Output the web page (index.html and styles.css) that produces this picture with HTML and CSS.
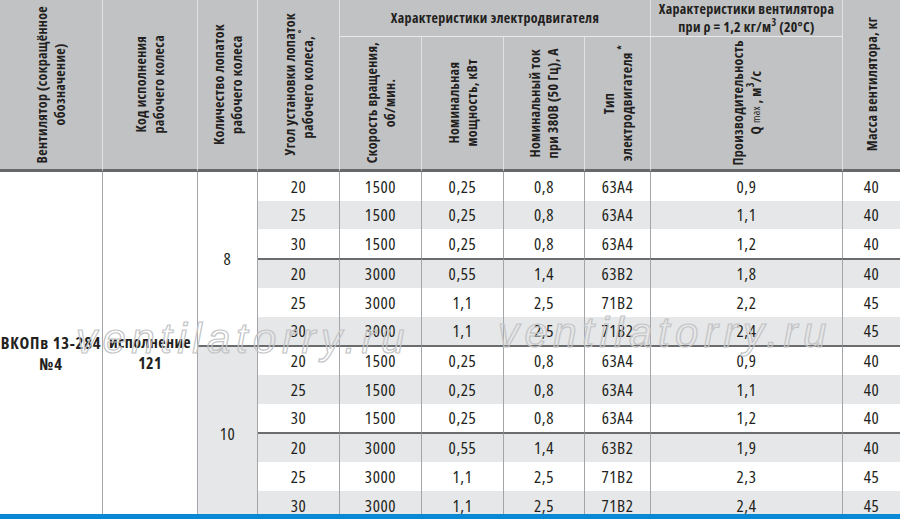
FILE: index.html
```html
<!DOCTYPE html>
<html lang="ru">
<head>
<meta charset="utf-8">
<title>ВКОПв 13-284 №4</title>
<link rel="stylesheet" href="styles.css">
</head>
<body>
<div class="page">
  <div class="sheet">
    <div class="grid">
      <div class="h s2"><span class="v">Вентилятор (сокращённое<br>обозначение)</span></div>
      <div class="h s2"><span class="v">Код исполнения<br>рабочего колеса</span></div>
      <div class="h s2"><span class="v">Количество лопаток<br>рабочего колеса</span></div>
      <div class="h s2"><span class="v">Угол установки лопаток<br>рабочего колеса, <sup>°</sup></span></div>
      <div class="h top g4"><span class="hz">Характеристики электродвигателя</span></div>
      <div class="h top"><span class="hz">Характеристики вентилятора<br>при ρ = 1,2 кг/м<sup>3</sup> (20°С)</span></div>
      <div class="h s2 last"><span class="v">Масса вентилятора, кг</span></div>

      <div class="h bot"><span class="v">Скорость вращения,<br>об/мин.</span></div>
      <div class="h bot"><span class="v">Номинальная<br>мощность, кВт</span></div>
      <div class="h bot"><span class="v">Номинальный ток<br>при 380В (50 Гц), А</span></div>
      <div class="h bot"><span class="v">Тип<br>электродвигателя <sup>*</sup></span></div>
      <div class="h bot"><span class="v">Производительность<br>Q <span class="sm">max</span> , м<sup>3</sup>/с</span></div>

      <!-- row 1 -->
      <div class="d r12 name wide">ВКОПв 13-284<br>№4</div>
      <div class="d r12 name">исполнение<br>121</div>
      <div class="d r6">8</div>
      <div class="d">20</div><div class="d">1500</div><div class="d">0,25</div><div class="d">0,8</div><div class="d">63А4</div><div class="d">0,9</div><div class="d last">40</div>
      <!-- row 2 -->
      <div class="d a">25</div><div class="d a">1500</div><div class="d a">0,25</div><div class="d a">0,8</div><div class="d a">63А4</div><div class="d a">1,1</div><div class="d a last">40</div>
      <!-- row 3 -->
      <div class="d">30</div><div class="d">1500</div><div class="d">0,25</div><div class="d">0,8</div><div class="d">63А4</div><div class="d">1,2</div><div class="d last">40</div>
      <!-- row 4 -->
      <div class="d a t">20</div><div class="d a t">3000</div><div class="d a t">0,55</div><div class="d a t">1,4</div><div class="d a t">63В2</div><div class="d a t">1,8</div><div class="d a t last">40</div>
      <!-- row 5 -->
      <div class="d">25</div><div class="d">3000</div><div class="d">1,1</div><div class="d">2,5</div><div class="d">71В2</div><div class="d">2,2</div><div class="d last">45</div>
      <!-- row 6 -->
      <div class="d a">30</div><div class="d a">3000</div><div class="d a">1,1</div><div class="d a">2,5</div><div class="d a">71В2</div><div class="d a">2,4</div><div class="d a last">45</div>
      <!-- row 7 -->
      <div class="d r6 a t">10</div>
      <div class="d t">20</div><div class="d t">1500</div><div class="d t">0,25</div><div class="d t">0,8</div><div class="d t">63А4</div><div class="d t">0,9</div><div class="d t last">40</div>
      <!-- row 8 -->
      <div class="d a">25</div><div class="d a">1500</div><div class="d a">0,25</div><div class="d a">0,8</div><div class="d a">63А4</div><div class="d a">1,1</div><div class="d a last">40</div>
      <!-- row 9 -->
      <div class="d">30</div><div class="d">1500</div><div class="d">0,25</div><div class="d">0,8</div><div class="d">63А4</div><div class="d">1,2</div><div class="d last">40</div>
      <!-- row 10 -->
      <div class="d a t">20</div><div class="d a t">3000</div><div class="d a t">0,55</div><div class="d a t">1,4</div><div class="d a t">63В2</div><div class="d a t">1,9</div><div class="d a t last">40</div>
      <!-- row 11 -->
      <div class="d">25</div><div class="d">3000</div><div class="d">1,1</div><div class="d">2,5</div><div class="d">71В2</div><div class="d">2,3</div><div class="d last">45</div>
      <!-- row 12 -->
      <div class="d a">30</div><div class="d a">3000</div><div class="d a">1,1</div><div class="d a">2,5</div><div class="d a">71В2</div><div class="d a">2,4</div><div class="d a last">45</div>
    </div>
    <span class="wm wm1">ventilatorry.ru</span>
    <span class="wm wm2">ventilatorry.ru</span>
  </div>
  <div class="bar"></div>
</div>
</body>
</html>
```

FILE: styles.css
```css
html, body {
  margin: 0;
  padding: 0;
  background: #ffffff;
}

.page {
  width: 900px;
  height: 519px;
  display: flex;
  flex-direction: column;
  overflow: hidden;
  color: #231f20;
  font-family: "Open Sans", "Liberation Sans", sans-serif;
  font-stretch: 75%;
}

.sheet {
  position: relative;
  flex: 1 1 auto;
  min-height: 0;
  overflow: hidden;
}

.bar {
  flex: 0 0 5px;
  background: #0a88d6;
}

.grid {
  display: grid;
  grid-template-columns: 103px 95px 60px 82px 82px 82px 81px 66px 192px 57px;
  grid-template-rows: 37px 135px 29px 28px 29px 30px 29px 28px 30px 29px 28px 30px 29px 29px;
}

/* header */
.h {
  box-sizing: border-box;
  background: #c1c2c4;
  border-right: 1px solid #e1e2e3;
  display: flex;
  align-items: center;
  justify-content: center;
  font-weight: bold;
  font-size: 14px;
  letter-spacing: 0.3px;
  line-height: 18px;
  text-align: center;
}

.h.s2 {
  grid-row: span 2;
  border-bottom: 3px solid #67686a;
}

.h.bot {
  border-bottom: 3px solid #67686a;
}

.h.top {
  border-bottom: 1px solid #e8e9ea;
}

.g4 {
  grid-column: span 4;
}

.last {
  border-right: 0 !important;
}

.v {
  writing-mode: vertical-rl;
  transform: rotate(180deg);
  white-space: nowrap;
}

.hz {
  white-space: nowrap;
}

.h sup {
  font-size: 10px;
  line-height: 0;
}

.sm {
  font-size: 11px;
  font-weight: normal;
}

/* body */
.d {
  box-sizing: border-box;
  background: #ffffff;
  border-right: 1px solid #a3a5a8;
  display: flex;
  align-items: center;
  justify-content: center;
  font-size: 17px;
  letter-spacing: 0.6px;
  line-height: 20px;
}

.d.a {
  background: #e6e7e8;
}

.d.t {
  border-top: 2px solid #6b6c6e;
}

.r12 {
  grid-row: span 12;
}

.r6 {
  grid-row: span 6;
}

.name {
  font-weight: bold;
  font-size: 16px;
  letter-spacing: 0.4px;
  line-height: 21px;
  text-align: center;
  white-space: nowrap;
  padding-top: 13px;
}

.name.wide {
  font-size: 16.5px;
  letter-spacing: 0.8px;
}

/* watermark */
.wm {
  position: absolute;
  font-family: "Liberation Sans", Arial, sans-serif;
  font-stretch: normal;
  font-style: italic;
  font-size: 42px;
  line-height: 42px;
  letter-spacing: 5.5px;
  white-space: nowrap;
  color: transparent;
  -webkit-text-stroke: 1.2px #c3c4c6;
  pointer-events: none;
}

.wm1 {
  left: 76px;
  top: 318px;
}

.wm2 {
  left: 498px;
  top: 312px;
}
```
